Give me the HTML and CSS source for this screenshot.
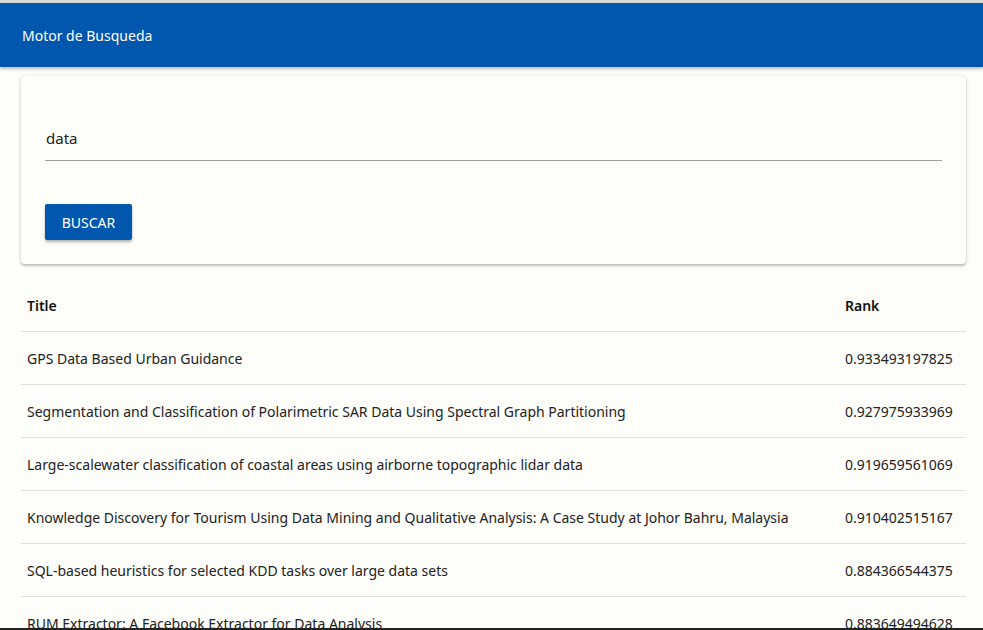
FILE: index.html
```html
<!DOCTYPE html>
<html lang="es">
<head>
<meta charset="utf-8">
<title>Motor de Busqueda</title>
<link rel="stylesheet" href="styles.css">
</head>
<body>
<div class="topline"></div>
<header class="appbar">
  <span class="appbar-title">Motor de Busqueda</span>
</header>
<main class="content">
  <section class="card">
    <div class="field">
      <input class="field-input" type="text" value="data">
    </div>
    <button class="btn">BUSCAR</button>
  </section>
  <table class="results">
    <thead>
      <tr><th class="col-title">Title</th><th class="col-rank">Rank</th></tr>
    </thead>
    <tbody>
      <tr><td>GPS Data Based Urban Guidance</td><td>0.933493197825</td></tr>
      <tr><td>Segmentation and Classification of Polarimetric SAR Data Using Spectral Graph Partitioning</td><td>0.927975933969</td></tr>
      <tr><td>Large-scalewater classification of coastal areas using airborne topographic lidar data</td><td>0.919659561069</td></tr>
      <tr><td>Knowledge Discovery for Tourism Using Data Mining and Qualitative Analysis: A Case Study at Johor Bahru, Malaysia</td><td>0.910402515167</td></tr>
      <tr><td>SQL-based heuristics for selected KDD tasks over large data sets</td><td>0.884366544375</td></tr>
      <tr><td>RUM Extractor: A Facebook Extractor for Data Analysis</td><td>0.883649494628</td></tr>
    </tbody>
  </table>
</main>
<div class="bottomline"></div>
</body>
</html>
```
FILE: styles.css
```css
html, body {
  margin: 0;
  padding: 0;
  height: 630px;
  overflow: hidden;
  background: #fdfdf9;
  font-family: "Segoe UI", "Noto Sans", "Open Sans", sans-serif;
  color: #222;
}
body { position: relative; }
.topline {
  height: 3px;
  background: #d9d9d9;
}
.appbar {
  height: 64px;
  background: #0057ad;
  display: flex;
  align-items: center;
  padding-left: 22px;
  box-shadow: 0 2px 3px rgba(0,0,0,0.25);
  position: relative;
  z-index: 1;
}
.appbar-title {
  color: #fff;
  font-size: 14px;
}
.content {
  padding: 9px 17px 0 21px;
}
.card {
  background: #fdfdf9;
  border-radius: 4px;
  box-shadow: 0 2px 2px rgba(0,0,0,0.18), 0 1px 5px rgba(0,0,0,0.12), 0 0 1px rgba(0,0,0,0.1);
  padding: 42px 24px 24px 24px;
  height: 188px;
  box-sizing: border-box;
}
.field {
  border-bottom: 1px solid #9e9e9e;
}
.field-input {
  border: 0;
  outline: none;
  background: transparent;
  font-family: inherit;
  font-size: 15px;
  color: #222;
  padding: 6px 0 8px 1px;
  width: 100%;
  height: 42px;
  box-sizing: border-box;
  display: block;
}
.btn {
  margin-top: 43px;
  background: #0057ad;
  color: #fff;
  border: 0;
  border-radius: 2px;
  height: 36px;
  width: 87px;
  font-family: inherit;
  font-size: 14px;
  box-shadow: 0 2px 3px rgba(0,0,0,0.3);
  display: block;
}
.results {
  width: 100%;
  border-collapse: collapse;
  margin-top: 15px;
  font-size: 14px;
}
.results th {
  text-align: left;
  font-weight: 600;
  height: 52px;
  padding: 0 0 0 6px;
  border-bottom: 1px solid #e0e0e0;
  color: #111;
}
.results td {
  height: 52px;
  padding: 0 0 0 6px;
  border-bottom: 1px solid #e0e0e0;
  color: #222;
}
.results .col-rank { width: 121px; }
.bottomline {
  position: absolute;
  left: 0;
  right: 0;
  top: 628px;
  height: 2px;
  background: #222;
}
```
